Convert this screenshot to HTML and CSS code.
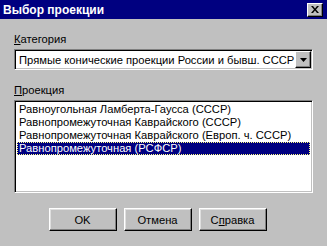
FILE: index.html
```html
<!DOCTYPE html>
<html lang="ru">
<head>
<meta charset="utf-8">
<title>Выбор проекции</title>
<link rel="stylesheet" href="styles.css">
</head>
<body>
<div class="window">
  <div class="titlebar">
    <span class="title">Выбор проекции</span>
    <span class="close">
      <svg width="8" height="7" viewBox="0 0 8 7"><path d="M0 0h2l2 2.5L6 0h2L5 3.5 8 7H6L4 4.5 2 7H0l3-3.5z" fill="#000"/></svg>
    </span>
  </div>
  <div class="content">
    <div class="label"><u>К</u>атегория</div>
    <div class="combo">
      <span class="combo-text">Прямые конические проекции России и бывш. СССР</span>
      <span class="drop">
        <svg width="7" height="4" viewBox="0 0 7 4"><path d="M0 0h7L3.5 4z" fill="#000"/></svg>
      </span>
    </div>
    <div class="label label2"><u>П</u>роекция</div>
    <div class="list">
      <div class="item">Равноугольная Ламберта-Гаусса (СССР)</div>
      <div class="item">Равнопромежуточная Каврайского (СССР)</div>
      <div class="item">Равнопромежуточная Каврайского (Европ. ч. СССР)</div>
      <div class="item selected">Равнопромежуточная (РСФСР)</div>
    </div>
    <div class="buttons">
      <button class="btn">OK</button>
      <button class="btn">Отмена</button>
      <button class="btn">С<u>п</u>равка</button>
    </div>
  </div>
</div>
</body>
</html>
```
FILE: styles.css
```css
* { box-sizing: border-box; }
html, body { margin: 0; padding: 0; }
body {
  background: #c0c0c0;
  font-family: "Liberation Sans", Arial, sans-serif;
  font-size: 11.2px;
  color: #000;
}
.window {
  width: 327px;
  height: 246px;
  background: #c0c0c0;
  overflow: hidden;
}
.titlebar {
  height: 19px;
  background: #000080;
  color: #fff;
  display: flex;
  align-items: center;
  justify-content: space-between;
  padding: 0 4px 0 3px;
}
.title {
  font-weight: bold;
  font-size: 12px;
}
.close {
  width: 16px;
  height: 14px;
  background: #c0c0c0;
  border-style: solid;
  border-width: 1px;
  border-color: #fff #000 #000 #fff;
  box-shadow: inset -1px -1px 0 #808080;
  display: flex;
  align-items: center;
  justify-content: center;
  padding-bottom: 1px;
}
.content {
  padding: 0 14px;
}
.label {
  margin-top: 14px;
  height: 13px;
  line-height: 13px;
}
.label2 {
  margin-top: 14px;
}
.combo {
  margin-top: 3px;
  height: 21px;
  background: #fff;
  border-style: solid;
  border-width: 1px;
  border-color: #808080 #fff #fff #808080;
  box-shadow: inset 1px 1px 0 #000, inset -1px -1px 0 #c0c0c0;
  display: flex;
  align-items: center;
  padding: 1px 1px 1px 4px;
}
.combo-text {
  flex: 1;
  white-space: nowrap;
  overflow: hidden;
}
.drop {
  flex: none;
  width: 16px;
  height: 17px;
  background: #c0c0c0;
  border-style: solid;
  border-width: 1px;
  border-color: #fff #000 #000 #fff;
  box-shadow: inset -1px -1px 0 #808080;
  display: flex;
  align-items: center;
  justify-content: center;
}
.list {
  margin-top: 3px;
  height: 93px;
  background: #fff;
  border-style: solid;
  border-width: 1px;
  border-color: #808080 #fff #fff #808080;
  box-shadow: inset 1px 1px 0 #000, inset -1px -1px 0 #c0c0c0;
  padding: 2px 2px;
}
.item {
  height: 13px;
  line-height: 13px;
  padding-left: 2px;
  white-space: nowrap;
}
.item.selected {
  background: #000080;
  color: #fff;
  outline: 1px dotted #ffff80;
  outline-offset: -1px;
}
.buttons {
  margin-top: 15px;
  display: flex;
  justify-content: center;
  gap: 7px;
  padding-right: 12px;
}
.btn {
  width: 68px;
  height: 23px;
  font-family: "Liberation Sans", Arial, sans-serif;
  font-size: 11.2px;
  color: #000;
  background: #c0c0c0;
  border-style: solid;
  border-width: 1px;
  border-color: #fff #000 #000 #fff;
  box-shadow: inset -1px -1px 0 #808080, inset 1px 1px 0 #dfdfdf;
  padding: 0;
}
```
